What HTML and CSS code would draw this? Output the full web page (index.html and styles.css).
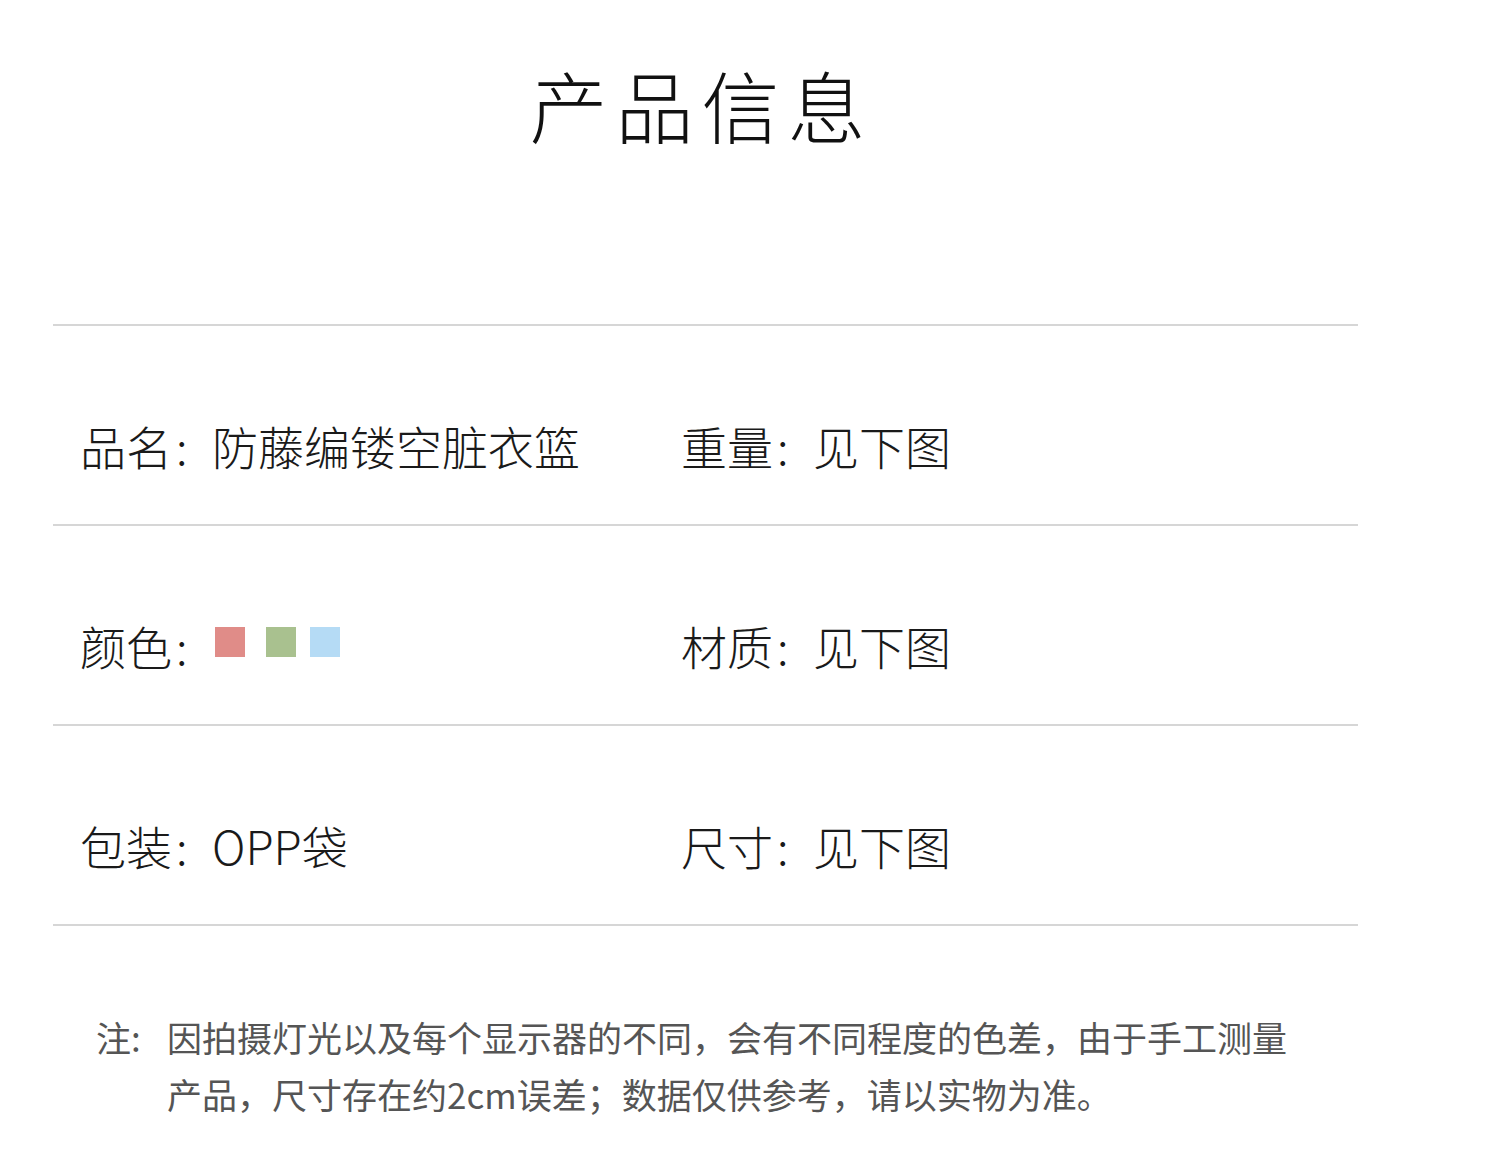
FILE: index.html
```html
<!DOCTYPE html>
<html lang="zh">
<head>
<meta charset="utf-8">
<title>产品信息</title>
<link rel="stylesheet" href="styles.css">
</head>
<body>
<div class="page">
  <h1 class="title">产品信息</h1>
  <div class="table">
    <div class="row">
      <div class="cell">品名<span class="colon">:</span>防藤编镂空脏衣篮</div>
      <div class="cell">重量<span class="colon">:</span>见下图</div>
    </div>
    <div class="row">
      <div class="cell">颜色<span class="colon">:</span><span class="swatches"><span class="sw sw-red"></span><span class="sw sw-green"></span><span class="sw sw-blue"></span></span></div>
      <div class="cell">材质<span class="colon">:</span>见下图</div>
    </div>
    <div class="row">
      <div class="cell">包装<span class="colon">:</span>OPP袋</div>
      <div class="cell">尺寸<span class="colon">:</span>见下图</div>
    </div>
  </div>
  <div class="note">
    <div class="note-label">注:</div>
    <div class="note-text">因拍摄灯光以及每个显示器的不同，会有不同程度的色差，由于手工测量<br>产品，尺寸存在约2cm误差；数据仅供参考，请以实物为准。</div>
  </div>
</div>
</body>
</html>
```
FILE: styles.css
```css
html, body {
  margin: 0;
  padding: 0;
  background: #ffffff;
}
body {
  font-family: "Noto Sans CJK SC", "Noto Sans", sans-serif;
  color: #222;
}
.page {
  width: 1500px;
  height: 1151px;
  overflow: hidden;
}
.title {
  margin: 0;
  padding-top: 49px;
  height: 272px;
  box-sizing: border-box;
  font-size: 78px;
  line-height: 110px;
  font-weight: 200;
  letter-spacing: 8px;
  text-align: center;
  color: #111;
  padding-left: 8px;
  width: 1395px;
}
.table {
  margin-left: 53px;
  width: 1305px;
  border-top: 2px solid #d6d6d6;
  margin-top: 52px;
}
.row {
  display: grid;
  grid-template-columns: 601px 1fr;
  height: 200px;
  box-sizing: border-box;
  border-bottom: 2px solid #d6d6d6;
  padding-left: 27px;
  padding-top: 40px;
  align-items: center;
}
.cell {
  font-size: 46px;
  line-height: 60px;
  font-weight: 300;
  display: flex;
  align-items: center;
  white-space: nowrap;
  color: #1a1a1a;
}
.colon {
  display: inline-block;
  width: 40px;
  padding-left: 4px;
  box-sizing: border-box;
}
.swatches {
  display: flex;
  gap: 21px;
  margin-left: 3px;
  margin-top: -6px;
}
.sw {
  display: block;
  width: 30px;
  height: 30px;
}
.sw-red { background: #e08c88; }
.sw-green { background: #a9c18f; margin-right: -7px; }
.sw-blue { background: #b5dbf5; }
.note {
  display: flex;
  margin-top: 82px;
  padding-left: 96px;
  font-size: 35px;
  line-height: 57px;
  color: #555;
}
.note-label {
  width: 71px;
  flex: none;
}
.note-text {
  white-space: nowrap;
}
```
